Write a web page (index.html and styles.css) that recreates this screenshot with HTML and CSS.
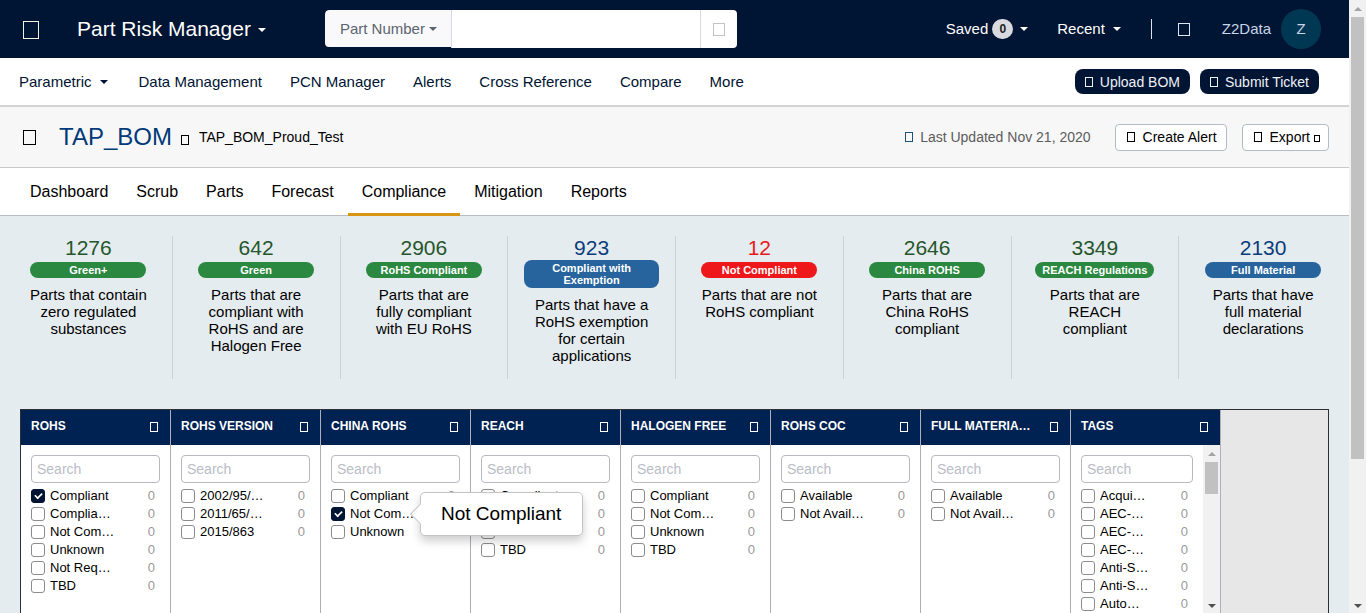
FILE: index.html
```html
<!DOCTYPE html>
<html lang="en">
<head>
<meta charset="utf-8">
<title>Part Risk Manager</title>
<link rel="stylesheet" href="styles.css">
</head>
<body>
<div class="page">
  <header class="topbar">
    <span class="glyph glyph-xl"></span>
    <button class="app-name">Part Risk Manager<i class="caret"></i></button>
    <form class="search">
      <button type="button" class="search-type">Part Number<i class="caret"></i></button>
      <input class="search-box" type="text" aria-label="Part number">
      <button type="button" class="search-go" aria-label="Search"><span class="glyph glyph-m"></span></button>
    </form>
    <div class="account">
      <button class="saved">Saved<span class="saved-count">0</span><i class="caret"></i></button>
      <button class="recent">Recent<i class="caret"></i></button>
      <span class="divider"></span>
      <span class="glyph glyph-m"></span>
      <a class="user" href="#">Z2Data<span class="avatar">Z</span></a>
    </div>
  </header>

  <nav class="nav">
    <a href="#">Parametric<i class="caret"></i></a>
    <a href="#">Data Management</a>
    <a href="#">PCN Manager</a>
    <a href="#">Alerts</a>
    <a href="#">Cross Reference</a>
    <a href="#">Compare</a>
    <a href="#">More</a>
    <div class="nav-actions">
      <button class="pill"><span class="glyph glyph-s"></span>Upload BOM</button>
      <button class="pill"><span class="glyph glyph-s"></span>Submit Ticket</button>
    </div>
  </nav>

  <section class="bom">
    <span class="glyph glyph-l"></span>
    <h1 class="bom-name">TAP_BOM</h1>
    <span class="glyph glyph-s bom-edit"></span>
    <span class="bom-file">TAP_BOM_Proud_Test</span>
    <span class="updated"><span class="glyph glyph-s"></span>Last Updated Nov 21, 2020</span>
    <button class="outline"><span class="glyph glyph-s"></span>Create Alert</button>
    <button class="outline"><span class="glyph glyph-s"></span>Export<span class="glyph glyph-xs"></span></button>
  </section>

  <nav class="tabs">
    <a href="#">Dashboard</a>
    <a href="#">Scrub</a>
    <a href="#">Parts</a>
    <a href="#">Forecast</a>
    <a href="#" class="active" aria-current="page">Compliance</a>
    <a href="#">Mitigation</a>
    <a href="#">Reports</a>
  </nav>

  <main class="content">
    <section class="stats">
      <article class="stat green"><strong>1276</strong><span class="badge">Green+</span><p>Parts that contain zero regulated substances</p></article>
      <article class="stat green"><strong>642</strong><span class="badge">Green</span><p>Parts that are compliant with RoHS and are Halogen Free</p></article>
      <article class="stat green"><strong>2906</strong><span class="badge">RoHS Compliant</span><p>Parts that are fully compliant with EU RoHS</p></article>
      <article class="stat blue"><strong>923</strong><span class="badge badge-tall">Compliant with Exemption</span><p>Parts that have a RoHS exemption for certain applications</p></article>
      <article class="stat red"><strong>12</strong><span class="badge">Not Compliant</span><p>Parts that are not RoHS compliant</p></article>
      <article class="stat green"><strong>2646</strong><span class="badge">China ROHS</span><p>Parts that are China RoHS compliant</p></article>
      <article class="stat green"><strong>3349</strong><span class="badge">REACH Regulations</span><p>Parts that are REACH compliant</p></article>
      <article class="stat blue"><strong>2130</strong><span class="badge">Full Material</span><p>Parts that have full material declarations</p></article>
    </section>

    <section class="filters">
      <div class="filter">
        <h2>ROHS<span class="glyph glyph-s"></span></h2>
        <div class="filter-body">
          <input class="filter-search" type="text" placeholder="Search" aria-label="Search ROHS">
          <ul>
            <li><label><input type="checkbox" checked>Compliant</label><span>0</span></li>
            <li><label><input type="checkbox">Complia…</label><span>0</span></li>
            <li><label><input type="checkbox">Not Com…</label><span>0</span></li>
            <li><label><input type="checkbox">Unknown</label><span>0</span></li>
            <li><label><input type="checkbox">Not Req…</label><span>0</span></li>
            <li><label><input type="checkbox">TBD</label><span>0</span></li>
          </ul>
        </div>
      </div>
      <div class="filter">
        <h2>ROHS VERSION<span class="glyph glyph-s"></span></h2>
        <div class="filter-body">
          <input class="filter-search" type="text" placeholder="Search" aria-label="Search ROHS version">
          <ul>
            <li><label><input type="checkbox">2002/95/…</label><span>0</span></li>
            <li><label><input type="checkbox">2011/65/…</label><span>0</span></li>
            <li><label><input type="checkbox">2015/863</label><span>0</span></li>
          </ul>
        </div>
      </div>
      <div class="filter">
        <h2>CHINA ROHS<span class="glyph glyph-s"></span></h2>
        <div class="filter-body">
          <input class="filter-search" type="text" placeholder="Search" aria-label="Search China ROHS">
          <ul>
            <li><label><input type="checkbox">Compliant</label><span>0</span></li>
            <li class="hinted"><label><input type="checkbox" checked>Not Com…</label><span>0</span><div class="tooltip" role="tooltip">Not Compliant</div></li>
            <li><label><input type="checkbox">Unknown</label><span>0</span></li>
          </ul>
        </div>
      </div>
      <div class="filter">
        <h2>REACH<span class="glyph glyph-s"></span></h2>
        <div class="filter-body">
          <input class="filter-search" type="text" placeholder="Search" aria-label="Search REACH">
          <ul>
            <li><label><input type="checkbox">Compliant</label><span>0</span></li>
            <li><label><input type="checkbox">Not Com…</label><span>0</span></li>
            <li><label><input type="checkbox">Unknown</label><span>0</span></li>
            <li><label><input type="checkbox">TBD</label><span>0</span></li>
          </ul>
        </div>
      </div>
      <div class="filter">
        <h2>HALOGEN FREE<span class="glyph glyph-s"></span></h2>
        <div class="filter-body">
          <input class="filter-search" type="text" placeholder="Search" aria-label="Search halogen free">
          <ul>
            <li><label><input type="checkbox">Compliant</label><span>0</span></li>
            <li><label><input type="checkbox">Not Com…</label><span>0</span></li>
            <li><label><input type="checkbox">Unknown</label><span>0</span></li>
            <li><label><input type="checkbox">TBD</label><span>0</span></li>
          </ul>
        </div>
      </div>
      <div class="filter">
        <h2>ROHS COC<span class="glyph glyph-s"></span></h2>
        <div class="filter-body">
          <input class="filter-search" type="text" placeholder="Search" aria-label="Search ROHS COC">
          <ul>
            <li><label><input type="checkbox">Available</label><span>0</span></li>
            <li><label><input type="checkbox">Not Avail…</label><span>0</span></li>
          </ul>
        </div>
      </div>
      <div class="filter">
        <h2>FULL MATERIA…<span class="glyph glyph-s"></span></h2>
        <div class="filter-body">
          <input class="filter-search" type="text" placeholder="Search" aria-label="Search full material">
          <ul>
            <li><label><input type="checkbox">Available</label><span>0</span></li>
            <li><label><input type="checkbox">Not Avail…</label><span>0</span></li>
          </ul>
        </div>
      </div>
      <div class="filter">
        <h2>TAGS<span class="glyph glyph-s"></span></h2>
        <div class="filter-scroll">
          <div class="filter-body">
            <input class="filter-search" type="text" placeholder="Search" aria-label="Search tags">
            <ul>
              <li><label><input type="checkbox">Acqui…</label><span>0</span></li>
              <li><label><input type="checkbox">AEC-…</label><span>0</span></li>
              <li><label><input type="checkbox">AEC-…</label><span>0</span></li>
              <li><label><input type="checkbox">AEC-…</label><span>0</span></li>
              <li><label><input type="checkbox">Anti-S…</label><span>0</span></li>
              <li><label><input type="checkbox">Anti-S…</label><span>0</span></li>
              <li><label><input type="checkbox">Auto…</label><span>0</span></li>
            </ul>
          </div>
          <div class="scrollbar"><i class="arrow up"></i><div class="track"><div class="thumb thumb-list"></div></div><i class="arrow down"></i></div>
        </div>
      </div>
    </section>
  </main>
</div>
<div class="scrollbar"><i class="arrow up"></i><div class="track"><div class="thumb thumb-page"></div></div><i class="arrow down"></i></div>
</body>
</html>
```
FILE: styles.css
```css
* { box-sizing: border-box; }

body {
  display: flex;
  height: 100vh;
  margin: 0;
  overflow: hidden;
  font: 15px/20px "Liberation Sans", Arial, sans-serif;
  color: #000;
}

a { color: inherit; text-decoration: none; }

button {
  display: inline-flex;
  align-items: center;
  padding: 0;
  border: 0;
  background: none;
  font: inherit;
  color: inherit;
  white-space: nowrap;
}

input { font: inherit; }

.page {
  display: flex;
  flex: 1;
  flex-direction: column;
  min-width: 0;
}

/* Icon boxes */
.glyph { flex: none; display: inline-block; border: 1px solid currentColor; }
.glyph-xs { width: 6px; height: 7px; }
.glyph-s { width: 8px; height: 10px; }
.glyph-m { width: 12px; height: 13px; }
.glyph-l { width: 13px; height: 15px; }
.glyph-xl { width: 16px; height: 18px; }

.caret {
  display: inline-block;
  border: 4px solid transparent;
  border-top-color: currentColor;
  border-bottom: 0;
  margin-left: 8px;
}

/* Top bar */
.topbar {
  display: flex;
  flex: none;
  align-items: center;
  height: 58px;
  padding: 0 28px 0 23px;
  background: #001433;
  color: #fff;
}
.topbar > .glyph { margin-top: 2px; color: #f4f1e4; }
.app-name { margin-left: 38px; font-size: 21px; }
.app-name .caret { margin: 2px 0 0 7px; }
.search {
  display: flex;
  width: 412px;
  height: 38px;
  margin-left: 59px;
  border-radius: 4px;
  overflow: hidden;
}
.search-type {
  height: 37px;
  padding: 0 14px 0 15px;
  border-radius: 4px 0 0 4px;
  background: #f9f9fb;
  color: #5c6470;
}
.search-type .caret { margin-left: 4px; }
.search-box {
  flex: 1;
  min-width: 0;
  padding: 0 12px;
  border: 0;
  border-left: 1px solid #d8dade;
  background: #fff;
}
.search-go {
  width: 37px;
  justify-content: center;
  border-left: 1px solid #d8dade;
  background: #fff;
  color: #c4c4c8;
}
.account {
  display: flex;
  align-items: center;
  margin-left: auto;
}
.saved-count {
  width: 21px;
  margin-left: 4px;
  border-radius: 10px;
  background: #d9dae0;
  color: #222;
  font-size: 12px;
  font-weight: bold;
}
.saved .caret { margin-left: 7px; }
.recent { margin-left: 29px; }
.divider { width: 1px; height: 20px; margin: 0 26px 0 30px; background: #dfe2e8; }
.account > .glyph { color: #dfe5f5; }
.user {
  display: flex;
  align-items: center;
  margin-left: 32px;
  color: #c9d4e8;
}
.avatar {
  width: 40px;
  margin-left: 10px;
  border-radius: 50%;
  background: #003853;
  line-height: 40px;
  text-align: center;
}

/* Main navigation */
.nav {
  display: flex;
  flex: none;
  align-items: center;
  gap: 28px;
  height: 49px;
  padding: 0 30px 0 19px;
  border-bottom: 2px solid #d3d3d3;
  background: #fff;
  color: #001433;
}
.nav a { display: flex; align-items: center; }
.nav a:first-child { margin-right: 3px; }
.nav-actions { display: flex; gap: 10px; margin-left: auto; }
.pill {
  gap: 7px;
  height: 25px;
  padding: 0 10px;
  border-radius: 8px;
  background: #001433;
  color: #eef1f7;
  font-size: 14px;
}

/* BOM title row */
.bom {
  display: flex;
  flex: none;
  align-items: center;
  height: 61px;
  padding: 0 20px 0 23px;
  border-bottom: 1px solid #c9c9c9;
  background: #f7f7f7;
  font-size: 14px;
}
.bom-name {
  margin: 0 9px 0 23px;
  color: #003a78;
  font-size: 24px;
  font-weight: normal;
}
.bom-edit { margin: 6px 10px 0 0; }
.updated {
  display: flex;
  align-items: center;
  gap: 7px;
  margin-left: auto;
  color: #5c5c5c;
}
.updated .glyph { color: #24507c; }
.outline {
  height: 27px;
  padding: 0 9px 0 11px;
  border: 1px solid #b3bcc6;
  border-radius: 4px;
  background: #fff;
}
.updated + .outline { margin: 0 15px 0 24px; }
.outline .glyph:first-child { margin-right: 8px; }
.outline:last-child { padding-right: 8px; }
.outline .glyph-xs { margin: 2px 0 0 4px; }

/* Tabs */
.tabs {
  display: flex;
  flex: none;
  height: 48px;
  padding: 0 16px;
  border-bottom: 1px solid #b9bec4;
  background: #fff;
  font-size: 16px;
}
.tabs a {
  height: 48px;
  padding: 0 14px;
  line-height: 47px;
}
.tabs .active { border-bottom: 3px solid #d99614; }

/* Compliance summary */
.content {
  display: flex;
  flex: 1;
  flex-direction: column;
  min-height: 0;
  background: #e5ecef;
}
.stats {
  display: grid;
  flex: none;
  grid-template-columns: repeat(8, 1fr);
  padding: 20px 2px 0 5px;
}
.stat {
  display: flex;
  flex-direction: column;
  align-items: center;
  min-height: 143px;
  padding: 0 16px;
  border-right: 1px solid #cbd3d8;
  text-align: center;
}
.stat:last-child { border-right: 0; }
.stat strong {
  font-size: 21px;
  font-weight: normal;
  line-height: 24px;
}
.badge {
  min-width: 116px;
  margin: 2px 0 8px;
  padding: 2px 7px;
  border-radius: 8px;
  color: #fff;
  font-size: 11px;
  font-weight: bold;
  line-height: 12px;
}
.badge-tall { margin-top: 0; width: 100%; }
.stat p { width: 120px; margin: 0; line-height: 17px; }
.green strong { color: #25562b; }
.green .badge { background: #2b8840; }
.blue strong { color: #0b3c7c; }
.blue .badge { background: #27649d; }
.red strong { color: #e8191c; }
.red .badge { background: #ee1719; }

/* Filters */
.filters {
  display: flex;
  flex: 1;
  min-height: 0;
  margin: 30px 20px 0;
  border: 1px solid #2c2f36;
  border-bottom: 0;
  background: #e7e7e7;
}
.filter {
  display: flex;
  flex: none;
  flex-direction: column;
  width: 150px;
  border-right: 1px solid #aeb0b6;
  background: #fff;
}
.filter h2 {
  display: flex;
  flex: none;
  align-items: center;
  justify-content: space-between;
  height: 35px;
  margin: 0;
  padding: 0 12px 3px 10px;
  background: #002253;
  color: #fff;
  font-size: 12px;
}
.filter h2 .glyph { margin-top: 2px; }
.filter-body { flex: 1; min-width: 0; padding: 10px 10px 0; }
.filter-scroll { display: flex; flex: 1; min-height: 0; }
.filter-search {
  display: block;
  width: 100%;
  height: 28px;
  padding: 0 5px;
  border: 1px solid #b6b8c4;
  border-radius: 4px;
  background: #fff;
  font-size: 14px;
}
.filter-search::placeholder { color: #b9bdc6; opacity: 1; }
.filter ul {
  margin: 4px 0 0;
  padding: 0 5px 0 0;
  list-style: none;
  font-size: 13px;
  line-height: 18px;
}
.filter li { display: flex; justify-content: space-between; }
.filter li span { color: #999; }
.filter label { display: flex; align-items: center; gap: 5px; }
.filter input[type="checkbox"] {
  display: grid;
  place-content: center;
  width: 14px;
  height: 14px;
  margin: 0;
  appearance: none;
  border: 1px solid #8c8c8c;
  border-radius: 3px;
  background: #fff;
}
.filter input[type="checkbox"]:checked { border-color: #001433; background: #001433; }
.filter input[type="checkbox"]:checked::before {
  content: "";
  width: 7px;
  height: 4px;
  margin-bottom: 2px;
  border: solid #fff;
  border-width: 0 0 2px 2px;
  transform: rotate(-45deg) scale(.8);
}
.hinted { position: relative; }

/* Tooltip floats right of the hovered label */
.tooltip {
  position: absolute;
  top: -13px;
  left: 89px;
  z-index: 2;
  padding: 11px 21px 11px 20px;
  border: 1px solid #c4c4c4;
  border-radius: 5px;
  background: #fff;
  box-shadow: 0 5px 10px rgba(0, 0, 0, .2);
  font-size: 19px;
  line-height: 20px;
  white-space: nowrap;
}
.tooltip::before {
  content: "";
  position: absolute;
  top: 50%;
  left: -8px;
  width: 14px;
  height: 14px;
  border: solid #c4c4c4;
  border-width: 0 0 1px 1px;
  background: #fff;
  transform: translateY(-50%) rotate(45deg);
}

/* Scrollbars */
.scrollbar {
  display: flex;
  flex: none;
  flex-direction: column;
  align-items: center;
  width: 17px;
  background: #f1f1f1;
}
.track { flex: 1; }
.thumb { width: 13px; background: #c1c1c1; }
.thumb-page { height: 76%; }
.thumb-list { height: 32px; }
.arrow { border: 4px solid transparent; }
.up { margin-bottom: 6px; border-top-width: 7px; border-bottom-color: #a3a3a3; }
.down { margin: 6px 0 2px; border-bottom-width: 3px; border-top-color: #505050; }
```
